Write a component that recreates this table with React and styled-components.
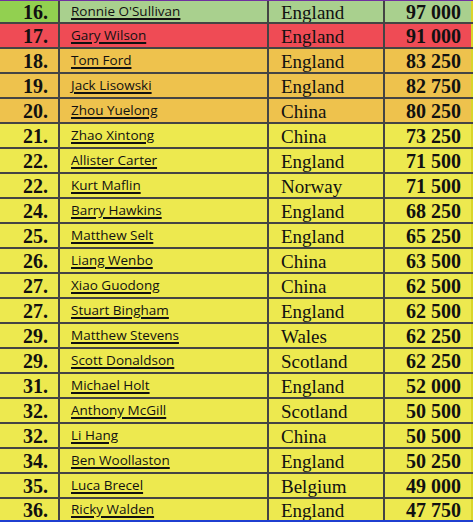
import React from "react";
import styled, {createGlobalStyle} from "styled-components";

const rows = [
  ["16.", "Ronnie O'Sullivan", "England", "97 000", "green"],
  ["17.", "Gary Wilson", "England", "91 000", "red"],
  ["18.", "Tom Ford", "England", "83 250", "orange"],
  ["19.", "Jack Lisowski", "England", "82 750", "orange"],
  ["20.", "Zhou Yuelong", "China", "80 250", "orange"],
  ["21.", "Zhao Xintong", "China", "73 250", "yellow"],
  ["22.", "Allister Carter", "England", "71 500", "yellow"],
  ["22.", "Kurt Maflin", "Norway", "71 500", "yellow"],
  ["24.", "Barry Hawkins", "England", "68 250", "yellow"],
  ["25.", "Matthew Selt", "England", "65 250", "yellow"],
  ["26.", "Liang Wenbo", "China", "63 500", "yellow"],
  ["27.", "Xiao Guodong", "China", "62 500", "yellow"],
  ["27.", "Stuart Bingham", "England", "62 500", "yellow"],
  ["29.", "Matthew Stevens", "Wales", "62 250", "yellow"],
  ["29.", "Scott Donaldson", "Scotland", "62 250", "yellow"],
  ["31.", "Michael Holt", "England", "52 000", "yellow"],
  ["32.", "Anthony McGill", "Scotland", "50 500", "yellow"],
  ["32.", "Li Hang", "China", "50 500", "yellow"],
  ["34.", "Ben Woollaston", "England", "50 250", "yellow"],
  ["35.", "Luca Brecel", "Belgium", "49 000", "yellow"],
  ["36.", "Ricky Walden", "England", "47 750", "yellow"],
];

// 첫 칸 색 / 나머지 칸 색
const colors = {
  green: {first: "#92d050", rest: "#a9d08e"},
  red: {first: "#ef4b55", rest: "#ef4b55"},
  orange: {first: "#eec24d", rest: "#eec24d"},
  yellow: {first: "#ede94f", rest: "#ede94f"},
};

const GlobalStyle = createGlobalStyle`
  body {
    margin: 0;
    background: #ffffff;
  }
`;

const App = () => {
  return (
    <>
      <GlobalStyle/>
      <Table>
        {rows.map(([pos, name, country, points, tone], i) => (
          <Row key={i}>
            <Pos $bg={colors[tone].first}>{pos}</Pos>
            <Name $bg={colors[tone].rest}><span>{name}</span></Name>
            <Country $bg={colors[tone].rest}>{country}</Country>
            <Points $bg={colors[tone].rest}>{points}</Points>
          </Row>
        ))}
      </Table>
    </>
  );
};

const Table = styled.div`
  width: 473px;
  display: flex;
  flex-direction: column;
`

const Row = styled.div`
  display: grid;
  grid-template-columns: 60px 209px 116px 88px;
  height: 25px;
  box-sizing: border-box;
  border-bottom: 2px solid #444444;
  &:first-child {
    height: 24px;
    border-top: 1px solid #7030a0;
  }
  &:last-child {
    height: 23px;
    border-bottom: 2px solid #1f3fd0;
  }
`

const Cell = styled.div`
  background: ${p => p.$bg};
  box-sizing: border-box;
  border-right: 2px solid #444444;
  display: flex;
  align-items: center;
  white-space: nowrap;
  overflow: hidden;
  color: #111111;
  &:last-child {
    border-right: 2px solid #d9d62a;
  }
`

const Pos = styled(Cell)`
  font-family: "Liberation Serif", serif;
  font-weight: bold;
  font-size: 20px;
  justify-content: flex-end;
  padding-right: 10px;
  padding-top: 2px;
`

const Name = styled(Cell)`
  font-family: "Open Sans", "Liberation Sans", sans-serif;
  font-size: 13.5px;
  padding-left: 11px;
  padding-bottom: 1px;
  span {
    text-decoration: underline;
    text-decoration-thickness: 1.5px;
    text-underline-offset: 2px;
  }
`

const Country = styled(Cell)`
  font-family: "Liberation Serif", serif;
  font-size: 19px;
  padding-left: 12px;
  padding-top: 2px;
`

const Points = styled(Cell)`
  font-family: "Liberation Serif", serif;
  font-weight: bold;
  font-size: 20px;
  justify-content: flex-end;
  padding-right: 10px;
  padding-top: 2px;
`

export default App;
